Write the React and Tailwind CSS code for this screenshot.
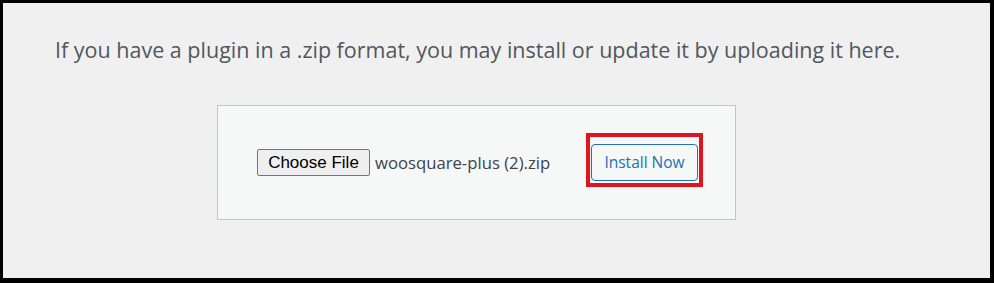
export default function App() {
  return (
    <div className="w-[994px] h-[283px] bg-black pt-[3px] pl-[3px] pr-[4px] pb-[5px]">
      <div className="h-full bg-[#f0f0f1] pl-[52px] pt-[33px]" style={{ fontFamily: '"Open Sans", "Noto Sans", sans-serif' }}>
        <p className="text-[21.5px] leading-[28px] text-[#50575e]">
          If you have a plugin in a .zip format, you may install or update it by uploading it here.
        </p>
        <div className="ml-[162px] mt-[41px] w-[519px] h-[115px] border border-[#c3c4c7] bg-[#f6f7f7] flex items-start pl-[39px]">
          <div className="mt-[43px] flex items-center">
            <button
              className="w-[113px] h-[27px] border border-[#767676] rounded-[2px] bg-[#efefef] text-[17px] text-black"
              style={{ fontFamily: '"Liberation Sans", Arial, sans-serif' }}
            >
              Choose File
            </button>
            <span className="ml-[5px] text-[16.7px] text-[#3c434a]">woosquare-plus (2).zip</span>
          </div>
          <div className="ml-auto mr-[32px] mt-[27px] border-[4px] border-[#e0141e] pt-[7px] pb-[2px] px-[1px]">
            <button className="block w-[107px] h-[37px] border border-[#2271b1] rounded-[4px] bg-[#f6f7f7] text-[15.5px] text-[#2271b1]">
              Install Now
            </button>
          </div>
        </div>
      </div>
    </div>
  );
}
